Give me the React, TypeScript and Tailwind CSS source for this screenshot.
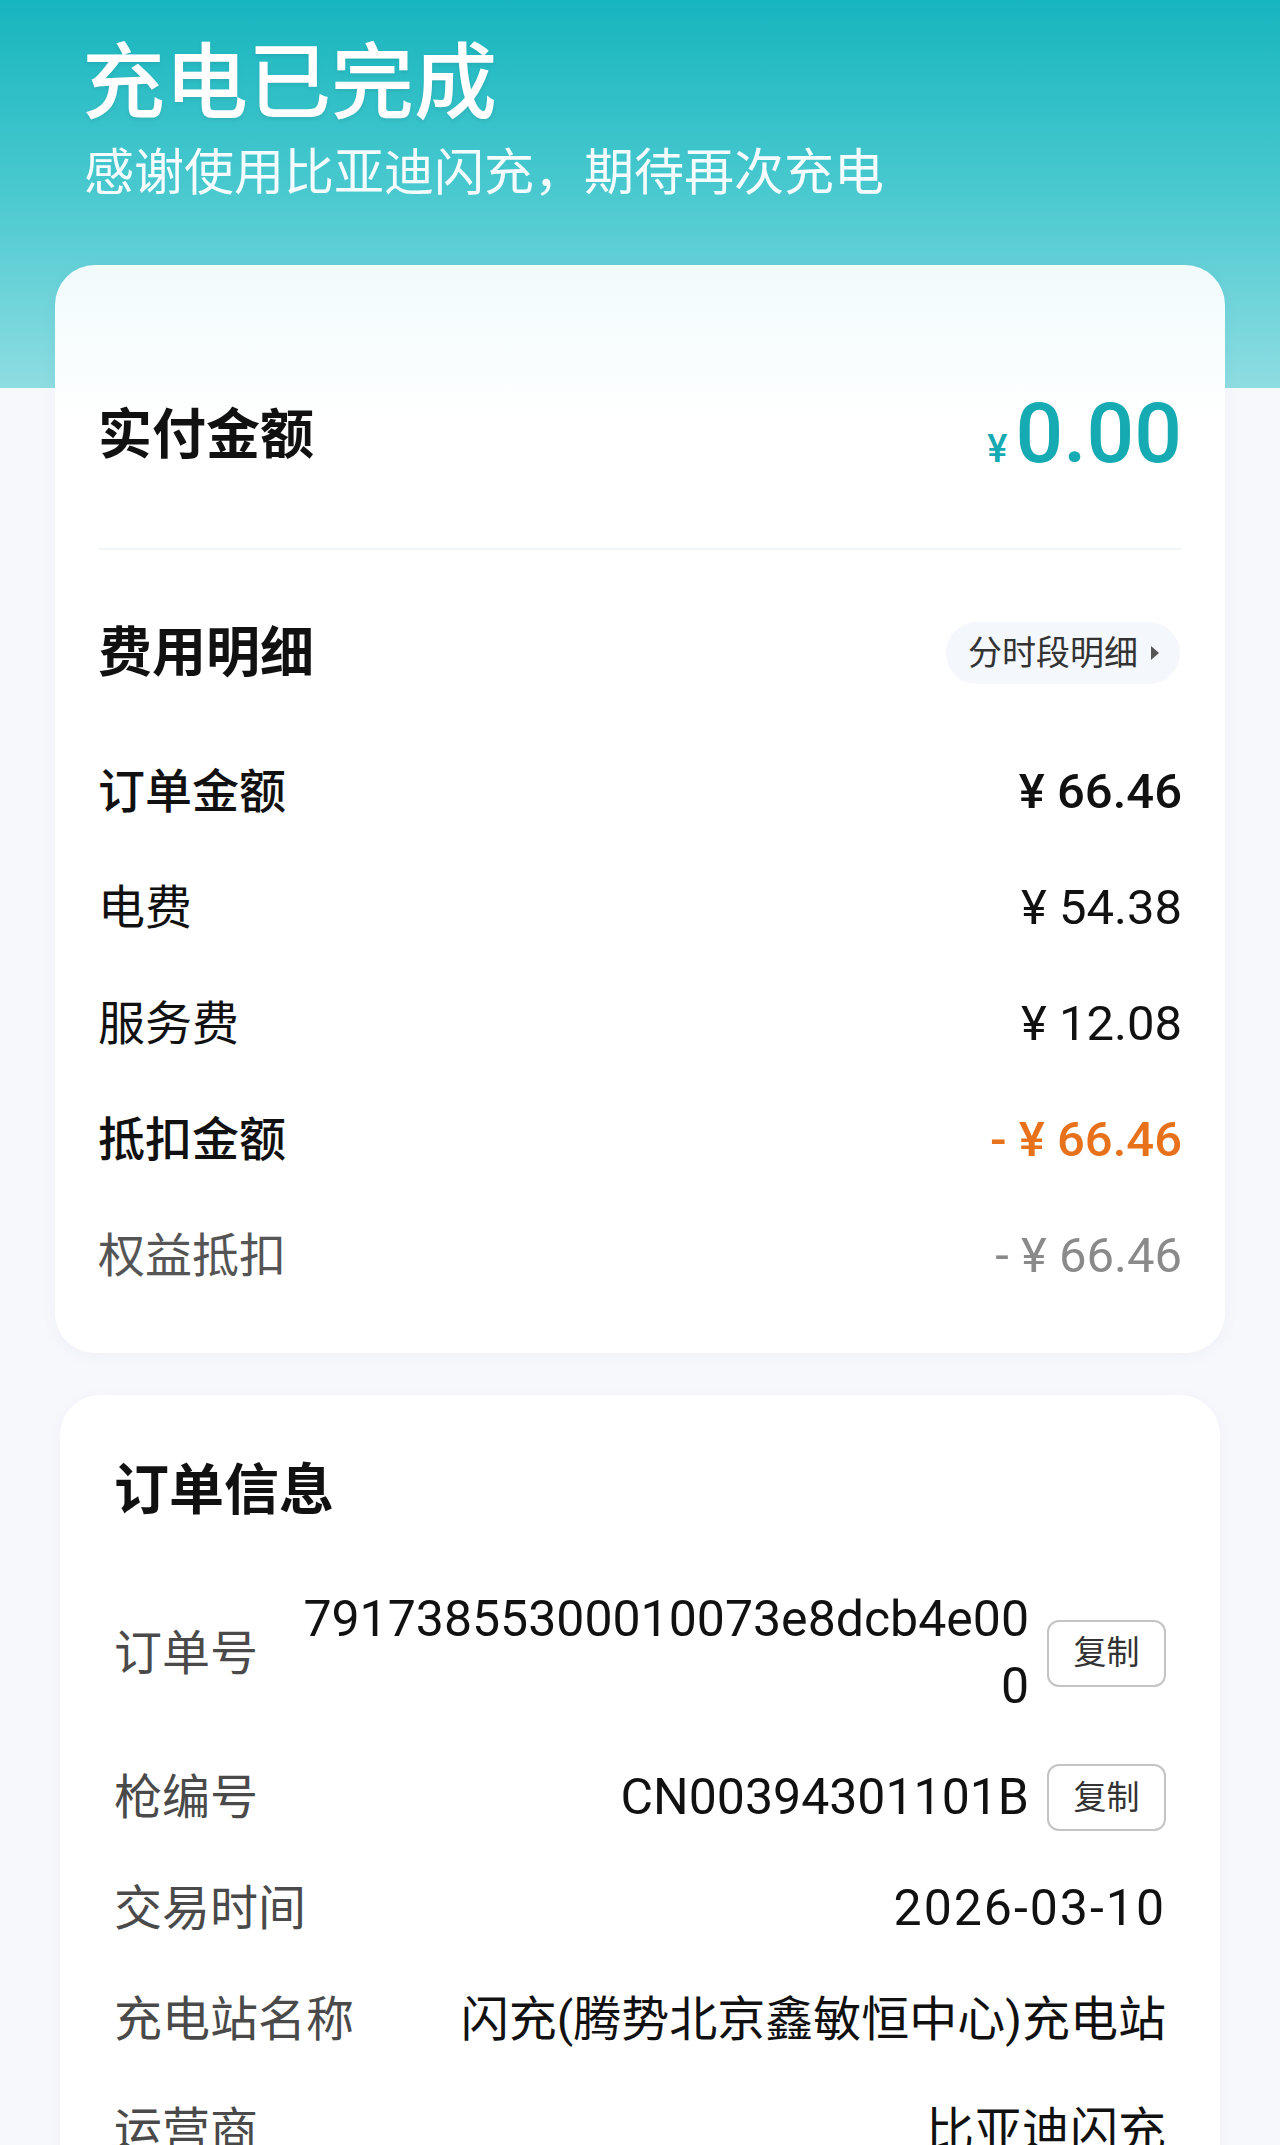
const font = "font-['Roboto','Noto_Sans_CJK_SC',sans-serif]";

const FeeRow = ({
  label,
  value,
  labelClass,
  valueClass,
}: {
  label: string;
  value: string;
  labelClass: string;
  valueClass: string;
}) => (
  <div className="flex h-[116px] items-center justify-between">
    <span className={labelClass}>{label}</span>
    <span className={valueClass}>{value}</span>
  </div>
);

const CopyButton = () => (
  <button className="flex h-[67px] w-[119px] shrink-0 items-center justify-center rounded-[12px] border-2 border-[#c4c4c4] bg-white text-[33px] text-[#333]">
    复制
  </button>
);

const InfoRow = ({ label, children }: { label: string; children: React.ReactNode }) => (
  <div className="flex items-center justify-between">
    <span className="shrink-0 text-[48px] leading-[67px] text-[#4a4a4a]">{label}</span>
    <div className="flex items-center gap-[18px]">{children}</div>
  </div>
);

export default function App() {
  return (
    <div
      className={`${font} min-h-[2145px] w-[1280px] bg-[#f6f8fc] bg-[linear-gradient(180deg,#17b5be_0%,#4ac9cf_50%,#8edde2_100%)] bg-[length:100%_388px] bg-no-repeat pb-20`}
    >
      <header className="pl-[82px] pr-[40px] pt-[35px]">
        <h1 className="text-[83px] font-medium leading-[97px] text-white [text-shadow:0_2px_4px_rgba(0,0,0,0.08)]">
          充电已完成
        </h1>
        <p className="mt-[12px] pl-[2px] text-[50px] leading-[58px] text-white/95">
          感谢使用比亚迪闪充，期待再次充电
        </p>
      </header>

      <section className="mx-[55px] mt-[63px] rounded-[40px] bg-[linear-gradient(180deg,#f1fbfc_0px,#ffffff_160px)] px-[43px] pb-[39px] pt-[120px] shadow-[0_4px_16px_rgba(40,80,120,0.04)]">
        <div className="flex h-[100px] items-center justify-between">
          <span className="text-[54px] font-bold text-[#111]">实付金额</span>
          <span className="flex items-baseline text-[#16aab3]">
            <span className="mr-[8px] text-[38px] font-medium">¥</span>
            <span className="text-[84px] font-medium leading-none">0.00</span>
          </span>
        </div>

        <div className="mt-[63px] h-[2px] bg-[#f2f5f8]" />

        <div className="mt-[72px] flex h-[62px] items-center justify-between">
          <span className="text-[54px] font-bold text-[#111]">费用明细</span>
          <span className="mr-[2px] flex h-[62px] items-center rounded-full bg-[#f4f7fb] pl-[22px] pr-[20px] text-[34px] text-[#333]">
            分时段明细
            <svg className="ml-[12px] h-[16px] w-[10px]" viewBox="0 0 10 16">
              <path d="M1 1 L9 8 L1 15 Z" fill="#555" />
            </svg>
          </span>
        </div>

        <div className="mt-[50px]">
          <FeeRow
            label="订单金额"
            value="¥ 66.46"
            labelClass="text-[47px] font-medium text-[#111]"
            valueClass="text-[49px] font-medium text-[#111]"
          />
          <FeeRow
            label="电费"
            value="¥ 54.38"
            labelClass="text-[47px] text-[#111]"
            valueClass="text-[49px] text-[#111]"
          />
          <FeeRow
            label="服务费"
            value="¥ 12.08"
            labelClass="text-[47px] text-[#111]"
            valueClass="text-[49px] text-[#111]"
          />
          <FeeRow
            label="抵扣金额"
            value="- ¥ 66.46"
            labelClass="text-[47px] font-medium text-[#111]"
            valueClass="text-[49px] font-medium text-[#e8721c]"
          />
          <FeeRow
            label="权益抵扣"
            value="- ¥ 66.46"
            labelClass="text-[47px] text-[#555]"
            valueClass="text-[49px] text-[#8a8a8a]"
          />
        </div>
      </section>

      <section className="mx-[60px] mt-[42px] rounded-[40px] bg-white px-[54px] pb-[40px] pt-[62px] shadow-[0_4px_16px_rgba(40,80,120,0.04)]">
        <h2 className="text-[55px] font-bold leading-[66px] text-[#111]">订单信息</h2>

        <div className="mt-[63px] flex flex-col gap-[44px]">
          <InfoRow label="订单号">
            <span className="text-right text-[50px] leading-[67px] text-[#111]">
              79173855300010073e8dcb4e00
              <br />0
            </span>
            <CopyButton />
          </InfoRow>
          <InfoRow label="枪编号">
            <span className="text-[50px] leading-[67px] text-[#111]">CN00394301101B</span>
            <CopyButton />
          </InfoRow>
          <InfoRow label="交易时间">
            <span className="text-[50px] leading-[67px] tracking-[2px] text-[#111]">2026-03-10</span>
          </InfoRow>
          <InfoRow label="充电站名称">
            <span className="text-[48px] leading-[67px] text-[#111]">闪充(腾势北京鑫敏恒中心)充电站</span>
          </InfoRow>
          <InfoRow label="运营商">
            <span className="text-[48px] leading-[67px] text-[#111]">比亚迪闪充</span>
          </InfoRow>
        </div>
      </section>
    </div>
  );
}
